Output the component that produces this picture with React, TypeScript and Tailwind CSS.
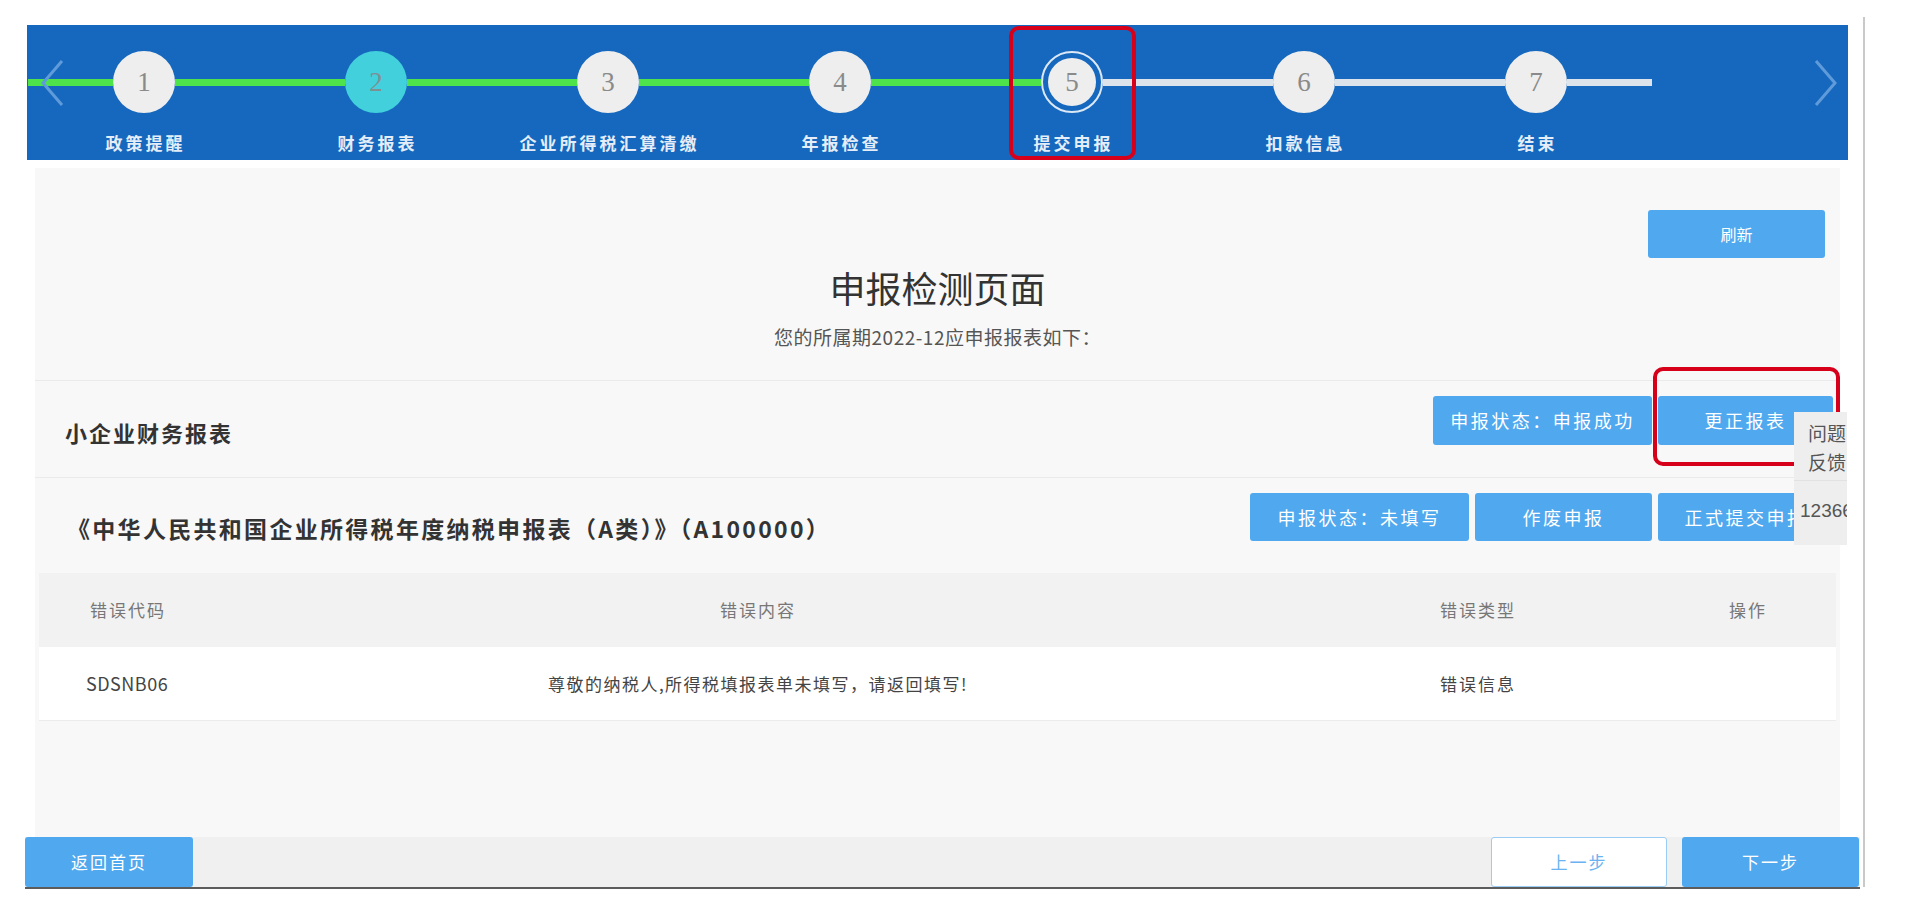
import React from 'react';

const steps = [
  { n: 1, label: '政策提醒' },
  { n: 2, label: '财务报表' },
  { n: 3, label: '企业所得税汇算清缴' },
  { n: 4, label: '年报检查' },
  { n: 5, label: '提交申报' },
  { n: 6, label: '扣款信息' },
  { n: 7, label: '结束' },
];

const CURRENT = 5;

function StepCircle({ n }: { n: number }) {
  if (n === CURRENT) {
    return (
      <div className="w-[62px] h-[62px] rounded-full border-2 border-[#dce8f6] flex items-center justify-center">
        <div className="w-[48px] h-[48px] rounded-full bg-[#eeeeee] flex items-center justify-center font-['Liberation_Serif',serif] text-[27px] text-[#8a8a8a]">
          {n}
        </div>
      </div>
    );
  }
  return (
    <div
      className={
        n === 2
          ? 'w-[62px] h-[62px] rounded-full bg-[#42d0dd] flex items-center justify-center font-[\'Liberation_Serif\',serif] text-[27px] text-[#7f8f92]'
          : 'w-[62px] h-[62px] rounded-full bg-[#eeeeee] flex items-center justify-center font-[\'Liberation_Serif\',serif] text-[27px] text-[#8a8a8a]'
      }
    >
      {n}
    </div>
  );
}

function Step({ n, label }: { n: number; label: string }) {
  const leftGreen = n <= CURRENT;
  const rightGreen = n < CURRENT;
  return (
    <div className="w-[232px] flex flex-col items-center">
      <div className="w-full h-[62px] flex items-center">
        <div className={leftGreen ? 'flex-1 h-[7px] bg-[#4ee34b]' : 'flex-1 h-[7px] bg-[#dde3ea]'} />
        <StepCircle n={n} />
        <div className={rightGreen ? 'flex-1 h-[7px] bg-[#4ee34b]' : 'flex-1 h-[7px] bg-[#dde3ea]'} />
      </div>
      <div className="mt-[18px] pl-[3px] text-[17px] leading-[24px] font-bold text-[#e4edf8] tracking-[3px] whitespace-nowrap">
        {label}
      </div>
    </div>
  );
}

function BlueButton({ children, className }: { children: React.ReactNode; className: string }) {
  return (
    <button
      className={`bg-[#50a8ee] text-white rounded-[3px] flex items-center justify-center whitespace-nowrap overflow-hidden ${className}`}
    >
      {children}
    </button>
  );
}

export default function App() {
  return (
    <div className="w-[1924px] h-[910px] bg-white overflow-hidden relative font-['Noto_Sans_CJK_SC',sans-serif]">
      <div className="flex">
        <div className="w-[1835px] ml-[25px]">
          {/* step header */}
          <div className="mt-[25px] ml-[2px] w-[1821px] h-[135px] bg-[#1568be] flex pt-[26px] pl-[1px]">
            {steps.map((s) => (
              <Step key={s.n} n={s.n} label={s.label} />
            ))}
          </div>

          {/* content */}
          <div className="mt-[8px] ml-[10px] w-[1805px] h-[669px] bg-[#f8f8f8]">
            <div className="pt-[42px] pr-[15px] flex justify-end">
              <BlueButton className="w-[177px] h-[48px] text-[16px]">刷新</BlueButton>
            </div>
            <h1 className="mt-[7px] text-center text-[36px] leading-[44px] text-[#333333]">申报检测页面</h1>
            <p className="mt-[15px] pb-[30px] text-center text-[19px] leading-[26px] tracking-[0.5px] text-[#555555]">
              您的所属期2022-12应申报报表如下：
            </p>

            <div className="h-[97px] border-t border-[#eaeaea] flex items-start justify-between pl-[30px] pr-[7px]">
              <div className="mt-[36px] text-[22px] leading-[30px] tracking-[2px] font-bold text-[#333333]">
                小企业财务报表
              </div>
              <div className="mt-[15px] flex gap-[6px] text-[18px] tracking-[2.5px]">
                <BlueButton className="w-[219px] h-[49px]">申报状态：申报成功</BlueButton>
                <BlueButton className="w-[175px] h-[49px]">更正报表</BlueButton>
              </div>
            </div>

            <div className="h-[96px] border-t border-[#eaeaea] flex items-start justify-between pl-[32px] pr-[6px]">
              <div className="mt-[35px] text-[23px] leading-[30px] tracking-[2.3px] font-bold text-[#333333] whitespace-nowrap">
                《中华人民共和国企业所得税年度纳税申报表（A类）》（A100000）
              </div>
              <div className="mt-[15px] flex gap-[6px] text-[18px] tracking-[2.5px]">
                <BlueButton className="w-[219px] h-[48px]">申报状态：未填写</BlueButton>
                <BlueButton className="w-[177px] h-[48px]">作废申报</BlueButton>
                <BlueButton className="w-[176px] h-[48px]">正式提交申报</BlueButton>
              </div>
            </div>

            {/* error table */}
            <div className="mx-[4px] border-b border-[#ececec]">
              <div className="h-[74px] bg-[#f2f2f2] grid grid-cols-[361px_716px_534px_1fr] items-center text-[17px] tracking-[2px] text-[#777777]">
                <div className="pl-[51px]">错误代码</div>
                <div className="text-center">错误内容</div>
                <div className="pl-[324px]">错误类型</div>
                <div className="text-center pl-[10px]">操作</div>
              </div>
              <div className="h-[73px] bg-white grid grid-cols-[361px_716px_534px_1fr] items-center text-[17px] tracking-[1.5px] text-[#444444]">
                <div className="pl-[47px] text-[18px] tracking-[0.5px]">SDSNB06</div>
                <div className="text-center">尊敬的纳税人,所得税填报表单未填写，请返回填写!</div>
                <div className="pl-[324px] tracking-[2px]">错误信息</div>
                <div />
              </div>
            </div>
          </div>

          {/* footer bar */}
          <div className="h-[50px] bg-[#f0f0f0] flex items-stretch justify-between text-[17px] tracking-[2px]">
            <BlueButton className="w-[168px]">返回首页</BlueButton>
            <div className="flex gap-[15px] pr-[1px]">
              <button className="w-[176px] bg-white border border-[#9ccbf3] text-[#6ab3f0] rounded-[3px]">
                上一步
              </button>
              <BlueButton className="w-[177px]">下一步</BlueButton>
            </div>
          </div>
          <div className="h-[2px] bg-[#5c5c5c]" />
        </div>

        {/* scrollbar edge */}
        <div className="ml-[3px] mt-[17px] w-[2px] h-[870px] bg-[#c9c9c9]" />
      </div>

      {/* carousel arrows */}
      <svg className="absolute left-[38px] top-[58px]" width="28" height="50" viewBox="0 0 28 50">
        <path d="M24 3 L5 25 L24 47" fill="none" stroke="#5f9bdb" strokeWidth="3" />
      </svg>
      <svg className="absolute left-[1812px] top-[58px]" width="28" height="50" viewBox="0 0 28 50">
        <path d="M4 3 L23 25 L4 47" fill="none" stroke="#5f9bdb" strokeWidth="3" />
      </svg>

      {/* highlight boxes */}
      <div className="absolute left-[1009px] top-[26px] w-[127px] h-[134px] border-4 border-[#d7001a] rounded-[10px]" />
      <div className="absolute left-[1653px] top-[367px] w-[187px] h-[99px] border-4 border-[#d7001a] rounded-[10px]" />

      {/* floating feedback tab */}
      <div className="absolute left-[1794px] top-[412px] w-[53px] h-[133px] bg-[#eeeeee] overflow-hidden text-[19px] text-[#555555]">
        <div className="pl-[14px] pt-[6px] w-[60px] h-[68px] leading-[29px]">问题反馈</div>
        <div className="border-t border-[#e2e2e2] pl-[6px] pt-[16px] whitespace-nowrap font-['Liberation_Sans',sans-serif]">
          12366
        </div>
      </div>
    </div>
  );
}
